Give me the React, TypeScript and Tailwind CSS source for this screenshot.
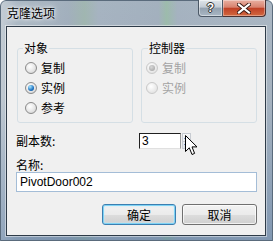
import React from "react";

const CJK = '"Noto Sans CJK SC", "Noto Sans", sans-serif';

function Radio({ checked, disabled }: { checked?: boolean; disabled?: boolean }) {
  return (
    <span
      className={
        disabled
          ? "w-[12px] h-[12px] rounded-full border border-[#c9c9c9] bg-[radial-gradient(circle_at_40%_35%,#ffffff,#e9e9e9_60%,#dcdcdc)] flex items-center justify-center shrink-0"
          : "w-[12px] h-[12px] rounded-full border border-[#8a8a8a] bg-[radial-gradient(circle_at_40%_35%,#ffffff,#e6e6e6_55%,#c8c8c8)] flex items-center justify-center shrink-0"
      }
    >
      {checked ? (
        <span
          className={
            disabled
              ? "w-[6px] h-[6px] rounded-full bg-[radial-gradient(circle_at_40%_35%,#d8d8d8,#9c9c9c)]"
              : "w-[6px] h-[6px] rounded-full bg-[radial-gradient(circle_at_35%_30%,#a9e8ff,#1f73c2_60%,#0b4987)]"
          }
        />
      ) : null}
    </span>
  );
}

function RadioRow({ label, checked, disabled }: { label: string; checked?: boolean; disabled?: boolean }) {
  return (
    <div className="h-[20px] flex items-center gap-[4px]">
      <Radio checked={checked} disabled={disabled} />
      <span className={disabled ? "text-[12px] leading-[14px] text-[#a3a3a3]" : "text-[12px] leading-[14px] text-black"}>
        {label}
      </span>
    </div>
  );
}

export default function App() {
  return (
    <div
      className="w-[273px] h-[241px] relative overflow-hidden flex flex-col rounded-t-[6px] bg-[linear-gradient(90deg,#c3ccd4_0%,#a9b6c2_6%,#9eacba_25%,#9cb3ad_31%,#a2b0be_36%,#9fadbb_58%,#98b8a8_61%,#a1afbd_65%,#a6b3c0_100%)]"
      style={{ fontFamily: CJK }}
    >
      {/* bottom bluish tint */}
      <div className="absolute inset-0 pointer-events-none bg-[linear-gradient(180deg,rgba(255,255,255,0.05)_0%,rgba(60,100,140,0.0)_40%,rgba(60,100,150,0.35)_100%)]" />
      <div className="absolute inset-0 pointer-events-none rounded-t-[6px] border border-[#5a6b7c]" />

      {/* title bar */}
      <div className="relative h-[26px] flex items-start shrink-0">
        <span className="ml-[7px] mt-[5px] text-[12px] leading-[16px] text-black [text-shadow:0_0_6px_#ffffff,0_0_3px_#ffffff]">
          克隆选项
        </span>
        <div className="ml-auto mr-[7px] flex h-[17px]">
          <div className="w-[25px] h-[17px] rounded-bl-[4px] border border-t-0 border-[#4b5866] bg-[linear-gradient(180deg,#dfe5ea_0%,#c2cbd4_45%,#93a1af_50%,#a9b7c4_100%)] flex items-center justify-center shadow-[inset_0_0_0_1px_rgba(255,255,255,0.45)]">
            <span
              className="text-white font-bold text-[12px] leading-[12px] [text-shadow:0_0_1px_#222,1px_0_0_#333,-1px_0_0_#333,0_1px_0_#333,0_-1px_0_#333]"
              style={{ fontFamily: '"Liberation Sans", sans-serif' }}
            >
              ?
            </span>
          </div>
          <div className="w-[43px] h-[17px] rounded-br-[4px] border border-l-0 border-t-0 border-[#4b3030] bg-[linear-gradient(180deg,#e9b0a2_0%,#d8826f_45%,#c04127_52%,#d2683f_100%)] flex items-center justify-center shadow-[inset_0_0_0_1px_rgba(255,255,255,0.35)]">
            <svg width="14" height="11" viewBox="0 0 14 11">
              <path d="M2 1.5 L12 9.5 M12 1.5 L2 9.5" stroke="#3a1a14" strokeWidth="4" strokeLinecap="square" />
              <path d="M2 1.5 L12 9.5 M12 1.5 L2 9.5" stroke="#ffffff" strokeWidth="2.2" strokeLinecap="square" />
            </svg>
          </div>
        </div>
      </div>

      {/* client area */}
      <div className="relative ml-[6px] mr-[7px] h-[210px] shrink-0 border border-[#2e3b48] bg-[#f0f0f0] shadow-[0_0_0_1px_rgba(255,255,255,0.45)] flex flex-col">
        {/* group boxes */}
        <div className="flex gap-[8px] ml-[10px] mt-[15px]">
          <fieldset className="w-[116px] h-[81px] border border-[#d5dfe5] rounded-[3px] pl-[5px] pr-[4px]">
            <legend className="px-[1px] text-[12px] leading-[12px] text-black">对象</legend>
            <div className="pt-[4px] pl-[2px] flex flex-col">
              <RadioRow label="复制" />
              <RadioRow label="实例" checked />
              <RadioRow label="参考" />
            </div>
          </fieldset>
          <fieldset className="w-[116px] h-[81px] border border-[#d5dfe5] rounded-[3px] pl-[6px] pr-[4px]">
            <legend className="px-[1px] text-[12px] leading-[12px] text-black">控制器</legend>
            <div className="pt-[4px] pl-[-1px] -ml-[2px] flex flex-col">
              <RadioRow label="复制" checked disabled />
              <RadioRow label="实例" disabled />
            </div>
          </fieldset>
        </div>

        {/* copies row */}
        <div className="flex items-center ml-[9px] mt-[10px] h-[16px]">
          <span className="w-[123px] text-[12px] leading-[14px] text-black">副本数:</span>
          <div className="w-[42px] h-[16px] border border-t-[#202020] border-l-[#202020] border-r-[#9a9a9a] border-b-[#e0e0e0] bg-white flex items-center pl-[2px]">
            <span className="text-[12px] leading-[12px] text-black" style={{ fontFamily: '"Liberation Sans", sans-serif' }}>
              3
            </span>
          </div>
          <div className="ml-[1px] w-[9px] h-[16px] flex flex-col border border-[#c8ccd2] bg-[linear-gradient(180deg,#f6f7f8,#dfe3e8)]">
            <div className="h-[7px] flex items-center justify-center">
              <svg width="5" height="3" viewBox="0 0 5 3">
                <path d="M0 3 L2.5 0 L5 3 Z" fill="#2a55a0" />
              </svg>
            </div>
            <div className="h-[7px] flex items-center justify-center border-t border-[#c8ccd2]">
              <svg width="5" height="3" viewBox="0 0 5 3">
                <path d="M0 0 L2.5 3 L5 0 Z" fill="#2a55a0" />
              </svg>
            </div>
          </div>
        </div>

        {/* name label */}
        <div className="ml-[9px] mt-[9px] h-[14px] text-[12px] leading-[14px] text-black">名称:</div>

        {/* name input */}
        <div className="ml-[9px] w-[241px] h-[20px] border border-[#a4bdd7] bg-white flex items-center pl-[3px]">
          <span className="text-[12px] leading-[14px] text-black" style={{ fontFamily: '"Liberation Sans", sans-serif' }}>
            PivotDoor002
          </span>
        </div>

        {/* buttons */}
        <div className="flex justify-end gap-[6px] mr-[8px] mt-[12px]">
          <div className="w-[74px] h-[21px] rounded-[3px] border border-[#3c7fb1] bg-[linear-gradient(180deg,#f2f2f2_0%,#ebebeb_50%,#dddddd_51%,#cfcfcf_100%)] shadow-[inset_0_0_0_1px_#7ed3f5,inset_0_0_2px_1px_#c6ecfb] flex items-center justify-center">
            <span className="text-[12px] leading-[14px] text-black">确定</span>
          </div>
          <div className="w-[75px] h-[21px] rounded-[3px] border border-[#707070] bg-[linear-gradient(180deg,#f2f2f2_0%,#ebebeb_50%,#dddddd_51%,#cfcfcf_100%)] shadow-[inset_0_0_0_1px_rgba(255,255,255,0.7)] flex items-center justify-center">
            <span className="text-[12px] leading-[14px] text-black">取消</span>
          </div>
        </div>
      </div>

      {/* mouse cursor overlay */}
      <svg className="absolute left-[185px] top-[135px]" width="13" height="21" viewBox="0 0 13 21">
        <path
          d="M0.5 0.5 L0.5 16.5 L4.3 12.8 L7 19.5 L9.6 18.4 L7 11.9 L12 11.9 Z"
          fill="#ffffff"
          stroke="#000000"
          strokeWidth="1"
          strokeLinejoin="miter"
        />
      </svg>
    </div>
  );
}
